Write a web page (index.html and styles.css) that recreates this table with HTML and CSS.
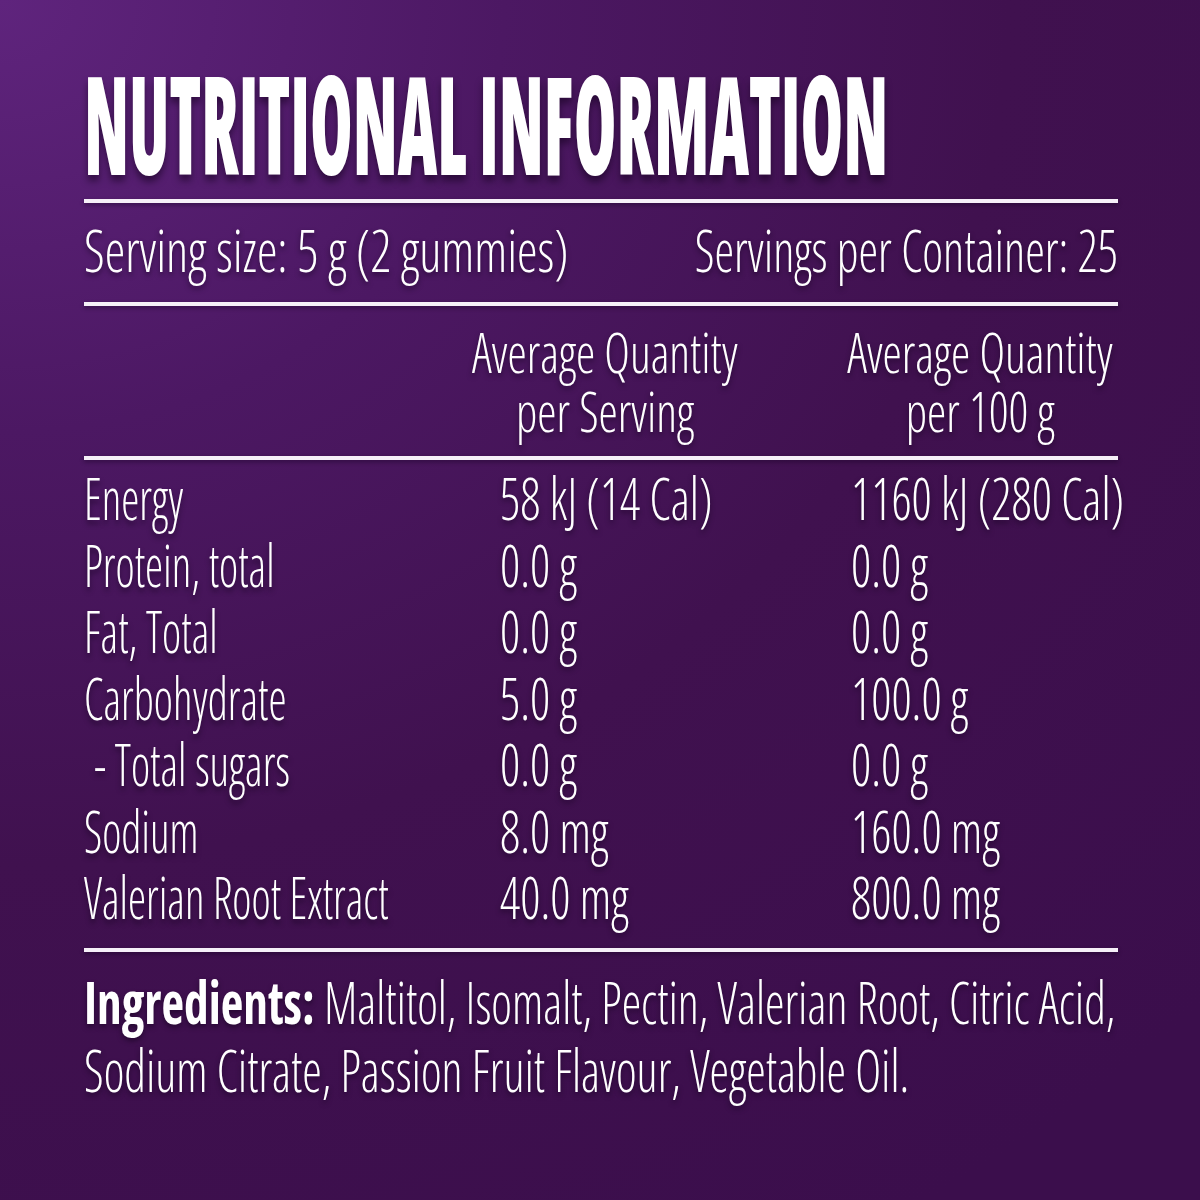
FILE: index.html
```html
<!DOCTYPE html>
<html lang="en">
<head>
<meta charset="utf-8">
<title>Nutritional Information</title>
<link rel="stylesheet" href="styles.css">
</head>
<body>
<main class="panel">
  <h1 class="title"><span class="fit fit-title">NUTRITIONAL INFORMATION</span></h1>
  <div class="rule"></div>
  <div class="serving">
    <div class="serving-cell"><span class="fit fit-serving">Serving size: 5 g (2 gummies)</span></div>
    <div class="serving-cell serving-end"><span class="fit fit-container">Servings per Container: 25</span></div>
  </div>
  <div class="rule rule-2"></div>
  <div class="head">
    <div></div>
    <div class="head-cell head-center">
      <div class="head-text"><span class="fit fit-head">Average Quantity</span><span class="fit fit-head">per Serving</span></div>
    </div>
    <div class="head-cell head-end">
      <div class="head-text"><span class="fit fit-head">Average Quantity</span><span class="fit fit-head">per 100 g</span></div>
    </div>
  </div>
  <div class="rule rule-3"></div>
  <div class="rows">
    <div class="row"><span class="fit fit-label">Energy</span><span class="fit fit-value">58 kJ (14 Cal)</span><span class="fit fit-value">1160 kJ (280 Cal)</span></div>
    <div class="row"><span class="fit fit-label">Protein, total</span><span class="fit fit-value">0.0 g</span><span class="fit fit-value">0.0 g</span></div>
    <div class="row"><span class="fit fit-label">Fat, Total</span><span class="fit fit-value">0.0 g</span><span class="fit fit-value">0.0 g</span></div>
    <div class="row"><span class="fit fit-label">Carbohydrate</span><span class="fit fit-value">5.0 g</span><span class="fit fit-value">100.0 g</span></div>
    <div class="row"><span class="fit fit-label sub">- Total sugars</span><span class="fit fit-value">0.0 g</span><span class="fit fit-value">0.0 g</span></div>
    <div class="row"><span class="fit fit-label">Sodium</span><span class="fit fit-value">8.0 mg</span><span class="fit fit-value">160.0 mg</span></div>
    <div class="row"><span class="fit fit-label">Valerian Root Extract</span><span class="fit fit-value">40.0 mg</span><span class="fit fit-value">800.0 mg</span></div>
  </div>
  <div class="rule rule-4"></div>
  <div class="ingredients">
    <span class="fit fit-ingr"><strong>Ingredients:</strong> Maltitol, Isomalt, Pectin, Valerian Root, Citric Acid,</span>
    <span class="fit fit-ingr">Sodium Citrate, Passion Fruit Flavour, Vegetable Oil.</span>
  </div>
</main>
</body>
</html>
```
FILE: styles.css
```css
html, body {
  margin: 0;
  padding: 0;
}
body {
  width: 1200px;
  height: 1200px;
  overflow: hidden;
  background: radial-gradient(ellipse 140% 120% at 0% 0%, #5f247d 0%, #4c1863 30%, #40114f 60%, #3b0e4c 100%);
  color: #ffffff;
  font-family: "Open Sans", "Liberation Sans", sans-serif;
  font-stretch: 75%;
}
.panel {
  box-sizing: border-box;
  width: 1200px;
  padding: 52px 82px 0 84px;
}

/* Condensed face: smaller font, stretched vertically back to full cap height */
.fit {
  display: block;
  white-space: nowrap;
  transform-origin: center center;
  text-shadow: 0 3px 5px rgba(18, 0, 28, 0.55);
}
.fit-title { font-size: 68.8px; transform: scaleY(1.976); font-weight: 760; }
.fit-serving { font-size: 51.9px; transform: scaleY(1.136); }
.fit-container { font-size: 49.6px; transform: scaleY(1.19); }
.fit-head { font-size: 48.7px; transform: scaleY(1.149); }
.fit-label { font-size: 45.7px; transform: scaleY(1.29); }
.fit-value { font-size: 49.6px; transform: scaleY(1.19); }
.fit-ingr { font-size: 49.3px; transform: scaleY(1.198); }

.title {
  margin: 0;
  line-height: 140px;
  font-weight: 760;
}
.rule {
  height: 4px;
  margin-top: 7px;
  background: #f6f0f8;
  box-shadow: 0 2px 4px rgba(18, 0, 28, 0.45);
}
.rule-2 { margin-top: 20px; }
.rule-3 { margin-top: 16px; }
.rule-4 { margin-top: 18px; }

.serving {
  display: grid;
  grid-template-columns: 1fr 1fr;
  margin-top: 13px;
  line-height: 66px;
  font-weight: 350;
}
.serving-cell {
  display: flex;
  min-width: 0;
}
.serving-end { justify-content: flex-end; }

.head {
  display: grid;
  grid-template-columns: 346px 350px 1fr;
  margin-top: 16px;
  line-height: 59px;
  font-weight: 350;
}
.head-cell { display: flex; min-width: 0; }
.head-center { justify-content: center; }
.head-end { justify-content: flex-end; padding-right: 5px; }
.head-text { text-align: center; }

.rows {
  margin-top: 4px;
  line-height: 66.5px;
  font-weight: 350;
}
.row {
  display: grid;
  grid-template-columns: 416px 351px 1fr;
  height: 66.5px;
}
.sub { padding-left: 10px; }

.ingredients {
  margin-top: 15px;
  line-height: 68px;
  font-weight: 350;
}
.ingredients strong { font-weight: 700; }
```
